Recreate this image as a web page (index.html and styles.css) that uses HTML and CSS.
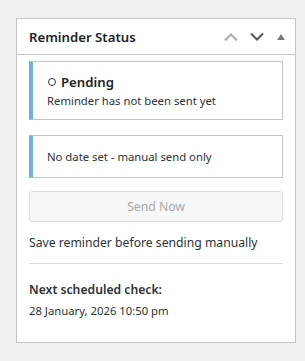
FILE: index.html
```html
<!DOCTYPE html>
<html>
<head>
    <meta charset="utf-8">
    <title>Reminder Status</title>
    <link rel="stylesheet" href="styles.css">
</head>
<body>
    <div class="postbox">
        <div class="postbox-header">
            <h2>Reminder Status</h2>
            <div class="handle-actions">
                <button class="handle up" aria-label="Move up">
                    <svg width="14" height="8" viewBox="0 0 14 8"><path d="M1 7.5 L7 1.5 L13 7.5" fill="none" stroke="currentColor" stroke-width="2"/></svg>
                </button>
                <button class="handle down" aria-label="Move down">
                    <svg width="14" height="8" viewBox="0 0 14 8"><path d="M1 0.5 L7 6.5 L13 0.5" fill="none" stroke="currentColor" stroke-width="2"/></svg>
                </button>
                <button class="handle toggle" aria-label="Toggle panel">
                    <svg width="8" height="6" viewBox="0 0 8 6"><path d="M0 6 L4 0 L8 6 Z" fill="currentColor"/></svg>
                </button>
            </div>
        </div>
        <div class="inside">
            <div class="notice">
                <p class="status"><span class="circle"></span>Pending</p>
                <p class="small">Reminder has not been sent yet</p>
            </div>
            <div class="notice">
                <p class="small">No date set - manual send only</p>
            </div>
            <button class="button" disabled>Send Now</button>
            <p class="description">Save reminder before sending manually</p>
            <hr>
            <p class="label">Next scheduled check:</p>
            <p class="small">28 January, 2026 10:50 pm</p>
        </div>
    </div>
</body>
</html>
```

FILE: styles.css
```css
body {
    margin: 0;
    padding: 18px 9px 0 16px;
    background-color: #f0f0f1;
    font-family: "Noto Sans", "Open Sans", sans-serif;
    color: #1d2327;
}
.postbox {
    width: 278px;
    background: white;
    border: 1px solid #c3c4c7;
    box-shadow: 0 1px 1px rgba(0,0,0,0.04);
}
.postbox-header {
    display: flex;
    align-items: center;
    justify-content: space-between;
    height: 35px;
    border-bottom: 1px solid #c3c4c7;
}
.postbox-header h2 {
    margin: 0;
    padding: 0 12px;
    font-size: 13.2px;
    font-weight: 600;
}
.handle-actions {
    display: flex;
    align-items: center;
    padding-right: 4px;
}
.handle {
    background: none;
    border: none;
    padding: 0;
    width: 26px;
    height: 35px;
    display: flex;
    align-items: center;
    justify-content: center;
    cursor: pointer;
}
.handle.up { color: #a7aaad; }
.handle.down { color: #50575e; }
.handle.toggle { color: #787c82; width: 21px; }
.inside {
    padding: 6px 12px 24px;
}
.notice {
    border: 1px solid #c3c4c7;
    border-left: 4px solid #72aee6;
    padding: 9px 14px;
    margin-bottom: 15px;
}
.notice p {
    margin: 2px 0;
}
.status {
    display: flex;
    align-items: center;
    font-size: 13.2px;
    font-weight: 600;
}
.circle {
    width: 6px;
    height: 6px;
    border: 1.3px solid #2c3338;
    border-radius: 50%;
    margin: 0 5px 0 1px;
}
.small {
    font-size: 11.3px;
    color: #2c3338;
}
.notice .small:only-child {
    margin: 4px 0;
}
.button {
    display: block;
    width: 100%;
    height: 31px;
    font-family: inherit;
    font-size: 12.2px;
    background: #f6f7f7;
    color: #a7aaad;
    border: 1px solid #dcdcde;
    border-radius: 3px;
    margin-top: -2px;
}
.description {
    font-size: 12.2px;
    margin: 12px 0 12px;
    color: #2c3338;
}
hr {
    border: none;
    border-top: 1px solid #dcdcde;
    margin: 0 0 17px;
}
.label {
    font-size: 12.2px;
    font-weight: 600;
    margin: 0 0 5px;
    color: #2c3338;
}
.inside > .small {
    margin: 0;
}
```
